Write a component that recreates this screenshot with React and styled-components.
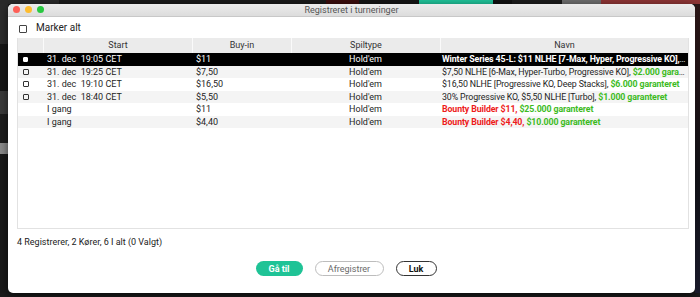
import React from 'react'
import styled, { createGlobalStyle } from 'styled-components'

const GlobalStyle = createGlobalStyle`
  html, body { margin: 0; padding: 0; }
  body {
    background: #1b1b1b;
    font-family: Roboto, "Liberation Sans", Arial, sans-serif;
    width: 700px;
    height: 297px;
    overflow: hidden;
  }
`

const rows = [
  { box: 'on', start: '31. dec  19:05 CET', buyin: '$11', type: "Hold'em", name: [['b', 'Winter Series 45-L: $11 NLHE [7-Max, Hyper, Progressive KO], $2.000 garanteret']], selected: true },
  { box: 'off', start: '31. dec  19:25 CET', buyin: '$7,50', type: "Hold'em", name: [['n', '$7,50 NLHE [6-Max, Hyper-Turbo, Progressive KO], '], ['g', '$2.000 garanteret']] },
  { box: 'off', start: '31. dec  19:10 CET', buyin: '$16,50', type: "Hold'em", name: [['n', '$16,50 NLHE [Progressive KO, Deep Stacks], '], ['g', '$6.000 garanteret']] },
  { box: 'off', start: '31. dec  18:40 CET', buyin: '$5,50', type: "Hold'em", name: [['n', '30% Progressive KO, $5,50 NLHE [Turbo], '], ['g', '$1.000 garanteret']] },
  { start: 'I gang', buyin: '$11', type: "Hold'em", name: [['r', 'Bounty Builder $11, '], ['g', '$25.000 garanteret']] },
  { start: 'I gang', buyin: '$4,40', type: "Hold'em", name: [['r', 'Bounty Builder $4,40, '], ['g', '$10.000 garanteret']] },
]

const App = () => {
  return (
    <>
      <GlobalStyle />
      <Desktop>
        <TopStrip>
          <Seg $w={60} $c='#2a2a2a' />
          <Seg $w={270} $c='#1a1a1a' />
          <Seg $w={34} $c='#3a0d0d' />
          <Seg $w={60} $c='#151515' />
          <Seg $w={75} $c='#20c39a' />
          <Seg $w={20} $c='#111' />
          <Seg $w={50} $c='#1c1c1c' />
          <Seg $w={40} $c='#6e6e6e' />
          <Seg $w={100} $c='#8e3535' />
          <Seg $w={0} $c='#2a0f0f' $grow />
        </TopStrip>
        <Middle>
          <SideLeft />
          <Window>
            <TitleBar>
              <Lights>
                <Light $c='#fe5f57' />
                <Light $c='#febc2e' />
                <Light $c='#28c840' />
              </Lights>
              <Title>Registreret i turneringer</Title>
            </TitleBar>
            <Body>
              <SelectAll>
                <Check />
                <span>Marker alt</span>
              </SelectAll>
              <Table>
                <HeaderRow>
                  <HeadCell />
                  <HeadCell>Start</HeadCell>
                  <HeadCell>Buy-in</HeadCell>
                  <HeadCell>Spiltype</HeadCell>
                  <HeadCell>Navn</HeadCell>
                </HeaderRow>
                {rows.map((r, i) => (
                  <Row key={i} $selected={r.selected} $alt={i % 2 === 1}>
                    <BoxCell>{r.box && <MiniBox $on={r.box === 'on'} />}</BoxCell>
                    <Cell>{r.start}</Cell>
                    <Cell>{r.buyin}</Cell>
                    <Cell $center>{r.type}</Cell>
                    <NameCell>
                      {r.name.map(([k, t], j) => (
                        <Part key={j} $kind={k}>{t}</Part>
                      ))}
                    </NameCell>
                  </Row>
                ))}
              </Table>
              <Summary>4 Registrerer, 2 Kører, 6 I alt (0 Valgt)</Summary>
              <Buttons>
                <PrimaryButton type='button'>Gå til</PrimaryButton>
                <GhostButton type='button'>Afregistrer</GhostButton>
                <DarkButton type='button'>Luk</DarkButton>
              </Buttons>
            </Body>
          </Window>
          <SideRight />
        </Middle>
      </Desktop>
    </>
  )
}

export default App

const Desktop = styled.div`
  width: 700px;
  height: 297px;
  display: flex;
  flex-direction: column;
  background: #1b1b1b;
`

const TopStrip = styled.div`
  display: flex;
  height: 4px;
`

const Seg = styled.div`
  width: ${p => p.$w}px;
  flex-grow: ${p => (p.$grow ? 1 : 0)};
  background: ${p => p.$c};
`

const Middle = styled.div`
  display: flex;
  height: 289px;
`

const SideLeft = styled.div`
  width: 8px;
  background: linear-gradient(#2b2b2b 0 14%, #161616 14% 30%, #3a3a3a 30% 38%, #1d1d1d 38% 48%, #8a8a8a 48% 52%, #1a1a1a 52%);
`

const SideRight = styled.div`
  flex: 1;
  background: linear-gradient(#2a1515, #101015 60%, #1a1a2a);
`

const Window = styled.div`
  width: 687px;
  height: 289px;
  background: #fff;
  border-radius: 5px;
  overflow: hidden;
  display: flex;
  flex-direction: column;
  box-shadow: 0 2px 8px rgba(0, 0, 0, 0.6);
`

const TitleBar = styled.div`
  height: 12px;
  background: linear-gradient(#ececec, #dcdcdc);
  border-bottom: 1px solid #c8c8c8;
  display: flex;
  align-items: center;
  position: relative;
`

const Lights = styled.div`
  display: flex;
  gap: 5px;
  padding-left: 5px;
  position: absolute;
  left: 0;
  top: 2px;
`

const Light = styled.div`
  width: 7px;
  height: 7px;
  border-radius: 50%;
  background: ${p => p.$c};
`

const Title = styled.div`
  flex: 1;
  text-align: center;
  font-size: 9px;
  color: #555;
`

const Body = styled.div`
  flex: 1;
  display: flex;
  flex-direction: column;
  padding: 0 6px 0 9px;
`

const SelectAll = styled.label`
  display: flex;
  align-items: center;
  gap: 9px;
  height: 21px;
  padding-left: 2px;
  font-size: 10px;
  color: #222;
`

const Check = styled.span`
  width: 6px;
  height: 6px;
  border: 1px solid #444;
  border-radius: 1px;
  margin-top: 2px;
`

const Table = styled.div`
  height: 190px;
  border: 1px solid #e2e2e2;
  border-top: none;
  background: #fff;
`

const grid = `
  display: grid;
  grid-template-columns: 25px 149px 99px 149px 1fr;
`

const HeaderRow = styled.div`
  ${grid}
  height: 15px;
  background: #ebebeb;
`

const HeadCell = styled.div`
  font-size: 9px;
  color: #333;
  text-align: center;
  line-height: 15px;
  border-left: 1px solid #fafafa;
  &:first-child { border-left: none; }
`

const Row = styled.div`
  ${grid}
  height: 12.5px;
  line-height: 12.5px;
  font-size: 9px;
  background: ${p => (p.$selected ? '#000' : p.$alt ? '#f4f4f4' : '#fff')};
  color: ${p => (p.$selected ? '#fff' : '#1e1e1e')};
`

const BoxCell = styled.div`
  display: flex;
  align-items: center;
  padding-left: 5px;
`

const MiniBox = styled.span`
  width: ${p => (p.$on ? 3 : 4)}px;
  height: ${p => (p.$on ? 3 : 4)}px;
  border: 1px solid ${p => (p.$on ? '#fff' : '#333')};
  background: ${p => (p.$on ? '#fff' : 'transparent')};
  border-radius: 1px;
`

const Cell = styled.div`
  padding-left: ${p => (p.$center ? 0 : 4)}px;
  text-align: ${p => (p.$center ? 'center' : 'left')};
  white-space: pre;
`

const NameCell = styled.div`
  padding-left: 2px;
  padding-right: 1px;
  font-size: 8.8px;
  letter-spacing: -0.12px;
  white-space: nowrap;
  overflow: hidden;
  text-overflow: ellipsis;
`

const partColor = { n: 'inherit', b: '#fff', g: '#3dbb1e', r: '#ee1b1b' }

const Part = styled.span`
  color: ${p => partColor[p.$kind]};
  font-weight: ${p => (p.$kind === 'n' ? 400 : 700)};
`

const Summary = styled.div`
  font-size: 9px;
  color: #222;
  margin-top: 8px;
  height: 16px;
`

const Buttons = styled.div`
  display: flex;
  justify-content: center;
  gap: 12px;
  margin-top: 8px;
  padding-right: 14px;
`

const Button = styled.button`
  height: 15px;
  border-radius: 8px;
  font-family: Roboto, "Liberation Sans", Arial, sans-serif;
  font-size: 9px;
  padding: 0;
  background: #fff;
`

const PrimaryButton = styled(Button)`
  width: 47px;
  background: #1fc396;
  border: none;
  color: #fff;
  font-weight: 700;
`

const GhostButton = styled(Button)`
  width: 69px;
  border: 1px solid #bdbdbd;
  color: #6a6a6a;
`

const DarkButton = styled(Button)`
  width: 41px;
  border: 1px solid #333;
  color: #111;
  font-weight: 700;
`
